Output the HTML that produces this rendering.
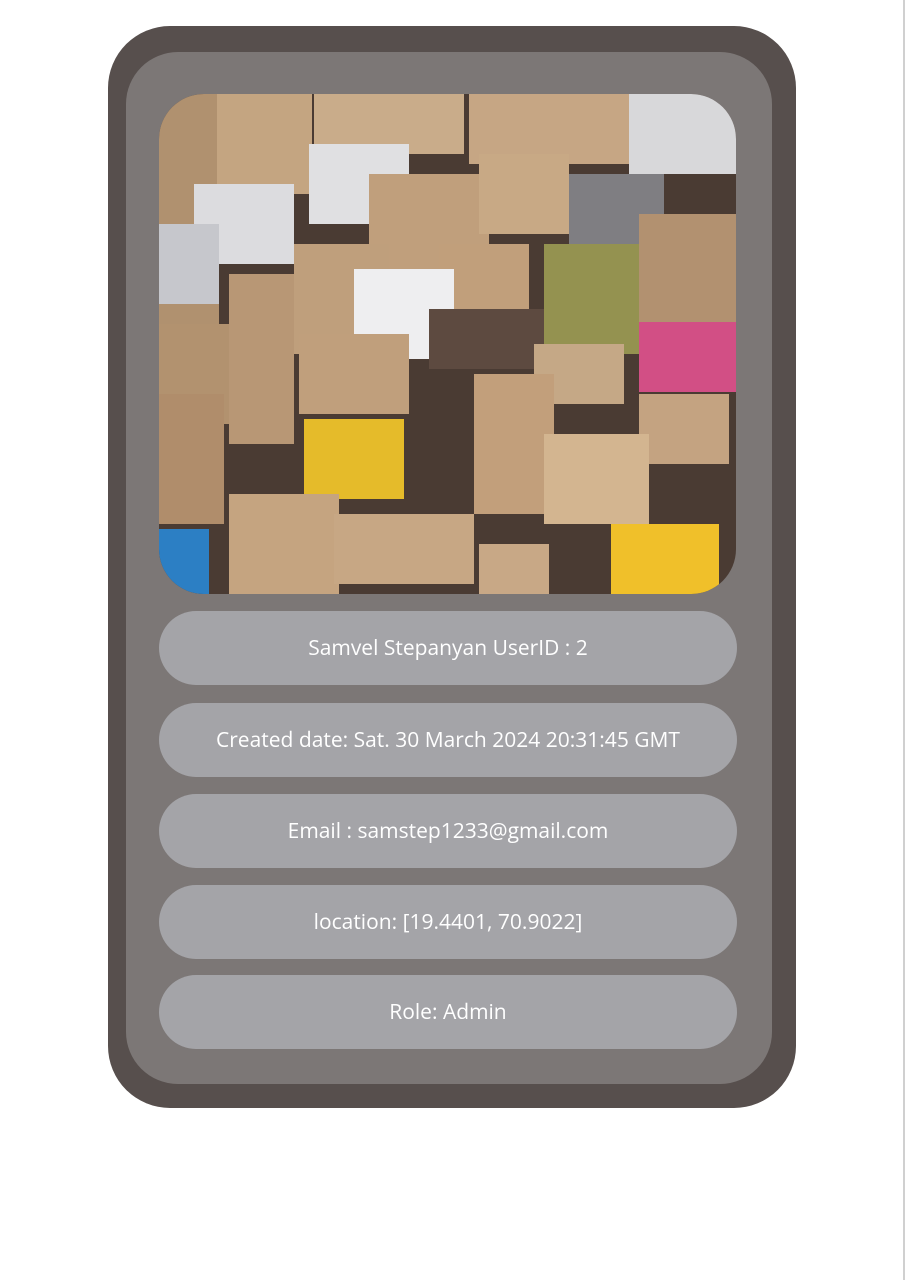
<!DOCTYPE html>
<html><head><meta charset="utf-8"><style>
html,body{margin:0;padding:0;background:#fff;width:905px;height:1280px;overflow:hidden;position:relative;font-family:"Open Sans","Liberation Sans",sans-serif}
.edge{position:absolute;left:903px;top:0;width:2px;height:1280px;background:#d0d0d0}
.outer{position:absolute;left:108px;top:26px;width:688px;height:1082px;background:#574f4d;border-radius:62px}
.inner{position:absolute;left:126px;top:52px;width:646px;height:1032px;background:#7c7776;border-radius:52px}
.img{position:absolute;left:159px;top:94px;width:577px;height:500px;border-radius:45px;overflow:hidden;background:#4a3b33}
.img div{position:absolute}
.pill{position:absolute;left:159px;width:578px;height:74px;border-radius:37px;background:#a4a4a8;color:#fff;font-size:21px;text-align:center;line-height:74px}
</style></head><body>
<div class="edge"></div>
<div class="outer"></div>
<div class="inner"></div>
<div class="img">
<div style="left:0;top:0;width:60px;height:230px;background:#b0916f"></div>
<div style="left:58px;top:0;width:95px;height:100px;background:#c4a581"></div>
<div style="left:155px;top:0;width:150px;height:60px;background:#c9ac8a"></div>
<div style="left:310px;top:0;width:160px;height:70px;background:#c6a684"></div>
<div style="left:470px;top:0;width:107px;height:80px;background:#d8d8da"></div>
<div style="left:35px;top:90px;width:100px;height:80px;background:#dcdcdf"></div>
<div style="left:150px;top:50px;width:100px;height:80px;background:#e0e0e2"></div>
<div style="left:210px;top:80px;width:120px;height:100px;background:#c09f7c"></div>
<div style="left:320px;top:60px;width:90px;height:80px;background:#c8a985"></div>
<div style="left:410px;top:80px;width:95px;height:90px;background:#7f7e82"></div>
<div style="left:0;top:130px;width:60px;height:80px;background:#c6c7cc"></div>
<div style="left:135px;top:150px;width:95px;height:110px;background:#bf9f7c"></div>
<div style="left:280px;top:150px;width:90px;height:70px;background:#c19f7b"></div>
<div style="left:385px;top:150px;width:100px;height:110px;background:#949250"></div>
<div style="left:480px;top:120px;width:97px;height:110px;background:#b29170"></div>
<div style="left:70px;top:180px;width:65px;height:170px;background:#b89775"></div>
<div style="left:195px;top:175px;width:100px;height:90px;background:#eeeef0"></div>
<div style="left:0;top:230px;width:70px;height:100px;background:#b2926f"></div>
<div style="left:140px;top:240px;width:110px;height:80px;background:#c09f7c"></div>
<div style="left:270px;top:215px;width:115px;height:60px;background:#5d4a40"></div>
<div style="left:480px;top:228px;width:97px;height:70px;background:#d24f85"></div>
<div style="left:375px;top:250px;width:90px;height:60px;background:#c5a886"></div>
<div style="left:0;top:300px;width:65px;height:130px;background:#b08d6b"></div>
<div style="left:145px;top:325px;width:100px;height:80px;background:#e5bb2a"></div>
<div style="left:315px;top:280px;width:80px;height:140px;background:#c29f7b"></div>
<div style="left:480px;top:300px;width:90px;height:70px;background:#c4a381"></div>
<div style="left:385px;top:340px;width:105px;height:90px;background:#d3b590"></div>
<div style="left:70px;top:400px;width:110px;height:100px;background:#c5a480"></div>
<div style="left:175px;top:420px;width:140px;height:70px;background:#c7a784"></div>
<div style="left:320px;top:450px;width:70px;height:50px;background:#c8a886"></div>
<div style="left:0;top:435px;width:50px;height:65px;background:#2c7fc4"></div>
<div style="left:452px;top:430px;width:108px;height:70px;background:#f0c02a"></div>
</div>
<div class="pill" style="top:611px">Samvel Stepanyan UserID : 2</div>
<div class="pill" style="top:703px">Created date: Sat. 30 March 2024 20:31:45 GMT</div>
<div class="pill" style="top:794px">Email : samstep1233@gmail.com</div>
<div class="pill" style="top:885px">location: [19.4401, 70.9022]</div>
<div class="pill" style="top:975px">Role: Admin</div>
</body></html>
